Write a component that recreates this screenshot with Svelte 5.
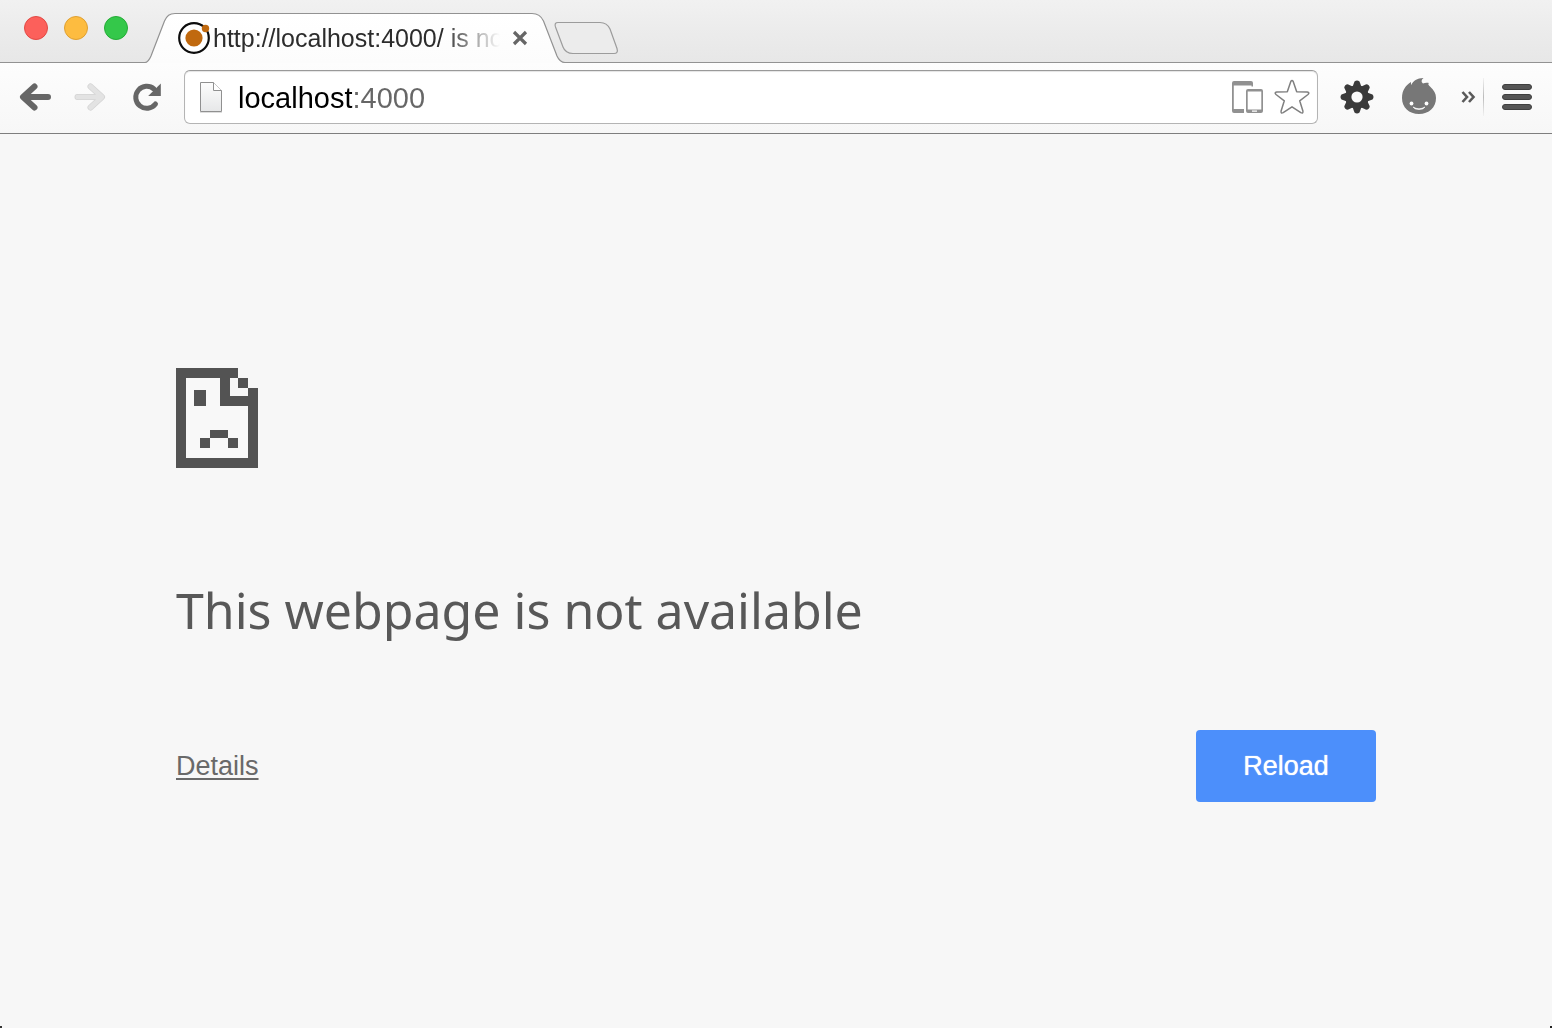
<script>
  let address = $state('localhost:4000');
  const lights = [
    { name: 'Close', kind: 'red' },
    { name: 'Minimize', kind: 'amber' },
    { name: 'Zoom', kind: 'green' }
  ];
  const teeth = [0, 45, 90, 135, 180, 225, 270, 315];
</script>

<div class="window">
  <header class="strip">
    <div class="lights">
      {#each lights as light}
        <button class="light {light.kind}" aria-label={light.name}></button>
      {/each}
    </div>

    <div class="tab">
      <svg class="shape" viewBox="0 0 420 50" aria-hidden="true">
        <defs>
          <linearGradient id="tabFill" x1="0" y1="0" x2="0" y2="1">
            <stop offset="0" stop-color="#ffffff" />
            <stop offset="1" stop-color="#fcfcfc" />
          </linearGradient>
        </defs>
        <path d="M-1 50V49.500C2 49.500 3.500 46.500 5 43L18.500 8C21 2.500 23.500.5 29 .5H386C392 .5 395 2.500 397.500 8L411 43C413 47.500 415 49.500 419 49.500H421V50Z" fill="url(#tabFill)" />
        <path d="M-1 49.500C2 49.500 3.500 46.500 5 43L18.500 8C21 2.500 23.500.5 29 .5H386C392 .5 395 2.500 397.500 8L411 43C413 47.500 415 49.500 419 49.500H421" fill="none" stroke="#929292" stroke-width="1.200" />
      </svg>
      <svg class="favicon" viewBox="0 0 32 32" aria-hidden="true">
        <circle cx="16" cy="16" r="14.800" fill="#fff" stroke="#0c0c0c" stroke-width="2.200" />
        <circle cx="16" cy="16" r="8.600" fill="#c0690f" />
        <circle cx="27.500" cy="6.500" r="3.700" fill="#c0690f" />
      </svg>
      <span class="title">http://localhost:4000/ is not available</span>
      <button class="close" aria-label="Close tab">
        <svg viewBox="0 0 16 16"><path d="M2 2L14 14M14 2L2 14" stroke="#666" stroke-width="3.200" /></svg>
      </button>
    </div>

    <button class="newtab" aria-label="New tab">
      <svg viewBox="0 0 66 34">
        <path d="M5 1.500H47Q54 1.500 57 8L64 27.500Q65.500 32.500 61 32.500H20Q12.500 32.500 10 26L2.500 6Q1 1.500 5 1.500Z" fill="#ececec" stroke="#9c9c9c" stroke-width="1.200" />
      </svg>
    </button>
  </header>

  <nav class="toolbar">
    <button class="back" aria-label="Back">
      <svg viewBox="0 0 32 28"><path d="M15.500 3.500L4 14L15.500 24.500M5 14H29" fill="none" stroke="#666" stroke-width="6" stroke-linecap="round" stroke-linejoin="round" /></svg>
    </button>
    <button class="forward" aria-label="Forward" disabled>
      <svg viewBox="0 0 32 28"><path d="M16.500 3.500L28 14L16.500 24.500M27 14H3.500" fill="none" stroke="#d4d4d4" stroke-width="6" stroke-linecap="round" stroke-linejoin="round" /><path d="M16.500 3.500L28 14L16.500 24.500M27 14H3.500" fill="none" stroke="#e3e3e3" stroke-width="4.500" stroke-linecap="round" stroke-linejoin="round" /></svg>
    </button>
    <button class="reload-icon" aria-label="Reload page">
      <svg viewBox="0 0 28 28"><path d="M22.500 21A11 11 0 1 1 21 6" fill="none" stroke="#666" stroke-width="5" stroke-linecap="round" /><path d="M27.800 .5V13H15.200Z" fill="#666" /></svg>
    </button>

    <div class="omnibox">
      <svg class="page" viewBox="0 0 24 32" aria-hidden="true">
        <defs>
          <linearGradient id="pageFill" x1="0" y1="0" x2="0" y2="1">
            <stop offset="0" stop-color="#fdfdfd" />
            <stop offset="1" stop-color="#e6e7e8" />
          </linearGradient>
        </defs>
        <path d="M1 31.500H23" stroke="#dedede" />
        <path d="M1.500 1.500H14.500L22.500 9.500V30.500H1.500Z" fill="url(#pageFill)" stroke="#909090" />
        <path d="M14.500 1.500V9.500H22.500" fill="#fff" stroke="#909090" />
      </svg>
      <input class="address" aria-label="Address" spellcheck="false" bind:value={address} />
      <button class="devices" aria-label="Open on another device">
        <svg viewBox="0 0 32 32">
          <path d="M0 2Q0 0 2 0H19Q21 0 21 2V5.500H19.500V4.500H1.800V28H12V32H2Q0 32 0 30Z" fill="#919191" />
          <path d="M16 8H29Q31 8 31 10V30Q31 32 29 32H16Q14 32 14 30V10Q14 8 16 8ZM15.700 10.500V28.500H29.300V10.500ZM20 29.500V30.700H25V29.500Z" fill="#919191" fill-rule="evenodd" />
        </svg>
      </button>
      <button class="star" aria-label="Bookmark this page">
        <svg viewBox="0 0 36 36"><path d="M16.800 2.500Q18 .5 19.200 2.500L22.700 12.700L33.300 13Q36 13.500 34 15.500L25.700 21.800L28.900 32Q29.400 34.800 26.800 33.600L18 27.800L9.200 33.600Q6.600 34.800 7.100 32L10.300 21.800L2 15.500Q0 13.500 2.700 13L13.300 12.700Z" fill="#fff" stroke="#808080" stroke-width="1.500" stroke-linejoin="round" /></svg>
      </button>
    </div>

    <button class="gear" aria-label="Settings extension">
      <svg viewBox="-17 -17 34 34">
        {#each teeth as angle}
          <path d="M-4.500-10L-2.500-15.500Q0-17.500 2.500-15.500L4.500-10Z" fill="#3a3a3a" transform="rotate({angle})" />
        {/each}
        <circle r="11.800" fill="#3a3a3a" />
        <circle r="5.600" fill="#fbfbfb" />
      </svg>
    </button>
    <button class="face" aria-label="Face extension">
      <svg viewBox="0 0 34 38">
        <path d="M0 20C0 12 4 7 9 4C9 6 9 6 9.300 7C11 3 15 0 21.500 0C19 2 19 4 21 5.500C23 4.500 25 4.500 27 5C25.500 6 26.500 7 28 8.500C32 12 34 15.500 34 20C34 29.500 27 36 17 36S0 29.500 0 20Z" fill="#777" />
        <path d="M11 29Q17 32.500 23 29Q21.500 31.500 17 31.500T11 29Z" fill="#fff" stroke="#fff" stroke-width=".6" />
        <circle cx="9.500" cy="25.500" r="1.900" fill="#fff" /><circle cx="24.500" cy="25.500" r="1.900" fill="#fff" />
      </svg>
    </button>
    <button class="more" aria-label="More extensions">
      <svg viewBox="0 0 15 12"><path d="M1.500 1L6 6L1.500 11M8 1L12.500 6L8 11" fill="none" stroke="#5a5a5a" stroke-width="2.600" /></svg>
    </button>
    <span class="divider"></span>
    <button class="menu" aria-label="Menu">
      <svg viewBox="0 0 30 26"><g fill="#555" stroke="#3f3f3f"><rect x=".5" y=".5" width="29" height="5" rx="2.500" /><rect x=".5" y="10.500" width="29" height="5" rx="2.500" /><rect x=".5" y="20.500" width="29" height="5" rx="2.500" /></g></svg>
    </button>
  </nav>

  <main>
    <svg class="sad" viewBox="0 0 82 100" shape-rendering="crispEdges" aria-hidden="true">
      <path d="M10 10H44V38H72V90H10Z" fill="#f8f8f8" />
      <path d="M0 0H62V10H54V28H72V20H82V100H0ZM10 10V90H72V38H44V10ZM62 10H72V20H62ZM18 22H30V38H18ZM34 62H52V70H34ZM24 70H34V80H24ZM52 70H62V80H52Z" fill="#535353" fill-rule="evenodd" />
    </svg>
    <h1>This webpage is not available</h1>
    <div class="actions">
      <a href="#details">Details</a>
      <button class="reload">Reload</button>
    </div>
  </main>
</div>

<style>
  :global(body) {
    margin: 0;
    background: #f7f7f7;
  }
  .window {
    display: flex;
    flex-direction: column;
    min-height: 100vh;
    font-family: 'Liberation Sans', Arial, sans-serif;
    background:
      linear-gradient(#333, #333) left bottom / 2px 2px no-repeat,
      linear-gradient(#222, #222) right bottom / 2px 2px no-repeat,
      #f7f7f7;
  }
  button {
    flex: none;
    padding: 0;
    border: 0;
    background: none;
    font: inherit;
  }
  svg {
    display: block;
    flex: none;
    width: 100%;
    height: 100%;
    overflow: visible;
  }
  .strip {
    display: flex;
    align-items: flex-end;
    box-sizing: border-box;
    height: 63px;
    background: linear-gradient(#f1f1f1, #ececec 45%, #e7e7e7);
    box-shadow: inset 0 -1px #929292;
  }
  .lights {
    display: flex;
    gap: 16px;
    align-self: flex-start;
    padding: 16px 18px 0 24px;
  }
  .light {
    width: 24px;
    height: 24px;
    border: 1px solid;
    border-radius: 50%;
  }
  .red {
    background: #fc605b;
    border-color: #e24944;
  }
  .amber {
    background: #fdbc40;
    border-color: #dfa032;
  }
  .green {
    background: #34c84a;
    border-color: #24ac36;
  }
  .tab {
    position: relative;
    display: flex;
    align-items: center;
    box-sizing: border-box;
    width: 420px;
    height: 50px;
    padding: 0 38px 0 32px;
  }
  .shape {
    position: absolute;
    inset: 0;
  }
  .favicon {
    position: relative;
    width: 32px;
    height: 32px;
  }
  .title {
    position: relative;
    flex: 1;
    margin: 0 12px 0 3px;
    overflow: hidden;
    white-space: nowrap;
    font-size: 25px;
    line-height: 32px;
    color: #2c2c2c;
    mask-image: linear-gradient(to right, #000 80%, transparent);
  }
  .close {
    position: relative;
    width: 16px;
    height: 16px;
  }
  .newtab {
    width: 66px;
    height: 34px;
    margin: 0 0 8px -13px;
    z-index: 1;
  }
  .toolbar {
    display: flex;
    align-items: center;
    padding: 7px 20px 9px 19px;
    border-bottom: 1px solid #7e7e7e;
    background: linear-gradient(#fdfdfd, #f7f7f7);
  }
  .back,
  .forward {
    width: 32px;
    height: 28px;
    margin-right: 23px;
  }
  .forward {
    margin-right: 27px;
  }
  .reload-icon {
    width: 28px;
    height: 28px;
    margin-right: 23px;
  }
  .omnibox {
    display: flex;
    flex: 1;
    align-items: center;
    box-sizing: border-box;
    min-width: 0;
    height: 54px;
    padding: 0 7px 0 14px;
    border: 1px solid #b4b4b4;
    border-top-color: #999;
    border-radius: 6px;
    background: #fff;
    box-shadow: inset 0 1px 1px #e4e4e4;
  }
  .page {
    width: 24px;
    height: 32px;
    margin-right: 15px;
  }
  .address {
    flex: 1;
    min-width: 0;
    height: 36px;
    padding: 2px 0 0;
    border: 0;
    outline: 0;
    font: 29px/36px 'Liberation Sans', Arial, sans-serif;
    color: #000;
    background: linear-gradient(to right, #000 114px, #666 114px);
    background-clip: text;
    -webkit-text-fill-color: transparent;
  }
  .devices {
    width: 32px;
    height: 32px;
    margin-right: 10px;
  }
  .star {
    width: 36px;
    height: 36px;
  }
  .gear {
    width: 34px;
    height: 34px;
    margin: 0 28px 0 22px;
  }
  .face {
    width: 34px;
    height: 38px;
    margin-right: 25px;
  }
  .more {
    width: 15px;
    height: 12px;
    margin-right: 7px;
  }
  .divider {
    width: 1px;
    height: 38px;
    margin-right: 18px;
    background: linear-gradient(#f2f2f2, #bbb, #f2f2f2);
  }
  .menu {
    width: 30px;
    height: 26px;
  }
  main {
    box-sizing: border-box;
    width: 100%;
    max-width: 1240px;
    margin: 0 auto;
    padding: 234px 20px 40px;
  }
  .sad {
    width: 82px;
    height: 100px;
  }
  h1 {
    margin: 112px 0 90px;
    font: 400 50px/60px 'Noto Sans', 'Open Sans', sans-serif;
    color: #585858;
  }
  .actions {
    display: flex;
    align-items: center;
    justify-content: space-between;
    font-size: 27px;
  }
  a {
    color: #696969;
    text-decoration-thickness: 2px;
    text-underline-offset: 3px;
  }
  .reload {
    width: 180px;
    height: 72px;
    border-radius: 4px;
    background: #4c8ffb;
    color: #fff;
    text-shadow: 0 0 1px #fff;
  }
</style>
